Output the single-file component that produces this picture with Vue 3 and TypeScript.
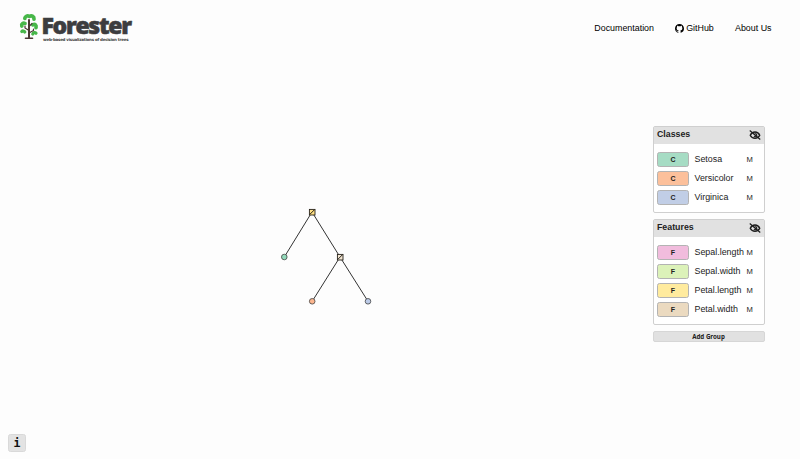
<script setup lang="ts">
interface Item { name: string; color: string }
interface Group { title: string; tag: string; items: Item[] }

const groups: Group[] = [
  {
    title: 'Classes',
    tag: 'C',
    items: [
      { name: 'Setosa', color: '#a6dcc4' },
      { name: 'Versicolor', color: '#fcc09b' },
      { name: 'Virginica', color: '#c1cee6' },
    ],
  },
  {
    title: 'Features',
    tag: 'F',
    items: [
      { name: 'Sepal.length', color: '#f1bcdd' },
      { name: 'Sepal.width', color: '#dcf2b9' },
      { name: 'Petal.length', color: '#ffeb9e' },
      { name: 'Petal.width', color: '#ebdac0' },
    ],
  },
]

const edges = [
  [312, 212, 284.3, 257],
  [312, 212, 340, 257],
  [340, 257, 312.2, 301.3],
  [340, 257, 368, 301.3],
]
const splits = [
  { x: 312, y: 212, color: '#ffdf82' },
  { x: 340, y: 257, color: '#f3e6d3' },
]
const leaves = [
  { x: 284.3, y: 257, color: '#93dbbb' },
  { x: 312.2, y: 301.3, color: '#fcb68f' },
  { x: 368, y: 301.3, color: '#bccbe8' },
]
</script>

<template>
  <div class="page">
    <svg class="canvas" width="800" height="459" viewBox="0 0 800 459">
      <line v-for="(e, i) in edges" :key="i" :x1="e[0]" :y1="e[1]" :x2="e[2]" :y2="e[3]" stroke="#333" stroke-width="1" />
      <g v-for="s in splits" :key="s.x">
        <rect :x="s.x - 2.6" :y="s.y - 2.6" width="5.6" height="5.6" :fill="s.color" stroke="#26221a" stroke-width="0.9" />
        <line :x1="s.x - 2.2" :y1="s.y + 2.4" :x2="s.x + 2.4" :y2="s.y - 2.2" stroke="#26221a" stroke-width="1" />
      </g>
      <circle v-for="l in leaves" :key="l.x" :cx="l.x" :cy="l.y" r="2.8" :fill="l.color" stroke="#444" stroke-width="0.8" />
    </svg>

    <header class="header">
      <svg class="logo" width="20" height="30" viewBox="0 0 20 30">
        <g fill="none" stroke="#47b749" stroke-width="3.7" stroke-linecap="round" stroke-linejoin="round">
          <path d="M5.8 6.4C6.2 4 8.4 3.4 10.4 4.4C13 3.2 15.2 4.6 15 7.2" />
          <path d="M2.8 14C2.2 12 4 10.8 6 11.4" />
          <path d="M13.8 12.8C16 11.6 17.6 13.2 17 15.6" />
          <path d="M2.8 19.6C3.6 18.6 5 18.8 5.8 20" stroke-width="3.2" />
          <path d="M13.8 22C14.4 20.4 16 20.2 17 21.2" stroke-width="3.2" />
        </g>
        <g fill="none" stroke="#4a3934" stroke-linecap="round">
          <path d="M10 8V25.5" stroke-width="2" />
          <path d="M10 14.5L13 11.5M10 18.5L6 16V14M10 21L14.5 18.5V17" stroke-width="1.2" />
          <path d="M6.5 26.2H13.5" stroke-width="1.6" />
        </g>
      </svg>
      <div class="wordmark">
        <span class="brand">Forester</span>
        <span class="tagline">web-based visualizations of decision trees</span>
      </div>
      <nav class="nav">
        <a>Documentation</a>
        <a class="github">
          <svg width="9" height="9" viewBox="0 0 16 16">
            <path fill="currentColor" d="M8 0C3.58 0 0 3.58 0 8c0 3.54 2.29 6.53 5.47 7.59.4.07.55-.17.55-.38 0-.19-.01-.82-.01-1.49-2.01.37-2.53-.49-2.69-.94-.09-.23-.48-.94-.82-1.13-.28-.15-.68-.52-.01-.53.63-.01 1.08.58 1.23.82.72 1.21 1.87.87 2.33.66.07-.52.28-.87.51-1.07-1.78-.2-3.64-.89-3.64-3.95 0-.87.31-1.59.82-2.15-.08-.2-.36-1.02.08-2.12 0 0 .67-.21 2.2.82A7.6 7.6 0 0 1 8 3.87c.68 0 1.36.09 2 .26 1.53-1.04 2.2-.82 2.2-.82.44 1.1.16 1.92.08 2.12.51.56.82 1.27.82 2.15 0 3.07-1.87 3.75-3.65 3.95.29.25.54.73.54 1.48 0 1.07-.01 1.93-.01 2.2 0 .21.15.46.55.38A8.01 8.01 0 0 0 16 8c0-4.42-3.58-8-8-8z" />
          </svg>
          <span>GitHub</span>
        </a>
        <a>About Us</a>
      </nav>
    </header>

    <aside class="sidebar">
      <section v-for="g in groups" :key="g.title" class="group">
        <h2 class="group-head">
          <span class="title">{{ g.title }}</span>
          <svg width="12" height="10" viewBox="0 0 24 20" fill="none" stroke="#1c1c1c">
            <path d="M2.5 10.5C6.5 2 17.5 2 21.5 10.5C17.5 18.5 6.5 18.5 2.5 10.5Z" stroke-width="2.8" />
            <path d="M11 8A3 3 0 1 1 10 12" stroke-width="2.2" />
            <path d="M1.5 1L22.5 19" stroke-width="2.4" />
          </svg>
        </h2>
        <ul class="items">
          <li v-for="item in g.items" :key="item.name" class="item">
            <span class="swatch" :style="{ backgroundColor: item.color }">{{ g.tag }}</span>
            <span class="name">{{ item.name }}</span>
            <span class="mode">M</span>
          </li>
        </ul>
      </section>
      <button class="add">Add Group</button>
    </aside>

    <footer class="footer">
      <button class="info">i</button>
    </footer>
  </div>
</template>

<style>
body {
  margin: 0;
  background: #fdfdfd;
}
</style>

<style scoped>
.page {
  position: relative;
  box-sizing: border-box;
  display: flex;
  flex-direction: column;
  width: 800px;
  height: 459px;
  overflow: hidden;
  font-family: "Liberation Sans", Arial, sans-serif;
  font-size: 9px;
  color: #222;
}
.canvas {
  position: absolute;
  inset: 0;
}
.header {
  display: flex;
  align-items: center;
  height: 56px;
  padding: 0 28.5px 0 19px;
}
.logo {
  margin-top: -3px;
}
.wordmark {
  display: flex;
  flex-direction: column;
  width: 100px;
  margin: -2px 0 0 2.5px;
  white-space: nowrap;
}
.brand {
  color: #3d3d3f;
  font: 800 23px/24px "Open Sans", sans-serif;
  letter-spacing: -1.3px;
  -webkit-text-stroke: 0.6px #3d3d3f;
}
.tagline {
  padding-left: 1.5px;
  color: #444;
  font: 700 4px/5px "DejaVu Sans", sans-serif;
  letter-spacing: -0.25px;
}
.nav {
  display: flex;
  gap: 21.2px;
  margin-left: auto;
  color: #000;
  font-size: 8.9px;
}
.github {
  display: flex;
  align-items: center;
  gap: 2px;
}
.sidebar {
  display: flex;
  flex-direction: column;
  gap: 6px;
  width: 112px;
  margin: 70px 0 0 652.5px;
}
.group {
  box-sizing: border-box;
  border: 1px solid #cfcfcf;
  border-radius: 2px;
  background: #fff;
}
.group-head {
  display: flex;
  align-items: center;
  justify-content: space-between;
  box-sizing: border-box;
  height: 17px;
  margin: 0;
  padding: 0 2.5px 1px 3.5px;
  background: #e1e1e1;
  font-size: 8.8px;
  line-height: 15px;
}
.title {
  padding-bottom: 1px;
}
.items {
  display: flex;
  flex-direction: column;
  gap: 4px;
  margin: 0;
  padding: 8px 3.5px 7px;
  list-style: none;
}
.item {
  display: grid;
  grid-template-columns: 32px 46.5px 20px;
  column-gap: 5.5px;
  align-items: center;
  height: 15px;
}
.swatch {
  box-sizing: border-box;
  height: 15px;
  border: 1px solid #b3b3b3;
  border-radius: 2.5px;
  font: 700 7px/13px "Liberation Sans", Arial, sans-serif;
  text-align: center;
}
.name {
  padding-bottom: 2px;
  font-size: 8.9px;
  white-space: nowrap;
}
.mode {
  font-size: 7.6px;
}
.add {
  height: 11px;
  padding: 0;
  border: 1px solid #d6d6d6;
  border-radius: 2px;
  background: #e1e1e1;
  color: #222;
  font: 700 6.2px/9px "Noto Sans", sans-serif;
}
.footer {
  display: flex;
  margin-top: auto;
  padding: 0 0 7px 8px;
}
.info {
  width: 18px;
  height: 18px;
  padding: 0;
  border: 1px solid #d9d9d9;
  border-radius: 2.5px;
  background: #e3e3e3;
  color: #111;
  font: 700 11.5px/17px "DejaVu Sans Mono", monospace;
}
</style>
